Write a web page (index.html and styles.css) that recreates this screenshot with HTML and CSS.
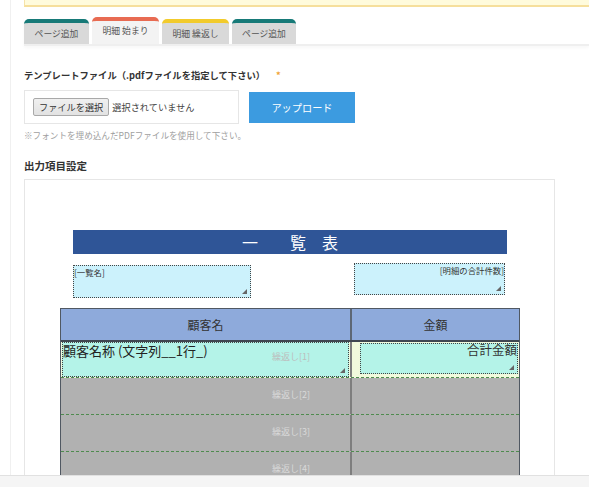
FILE: index.html
```html
<!DOCTYPE html>
<html lang="ja">
<head>
<meta charset="utf-8">
<title>帳票テンプレート設定</title>
<link rel="stylesheet" href="styles.css">
</head>
<body>
<div class="app">
  <div class="rail"></div>
  <div class="main">
    <div class="alert"></div>
    <div class="tabs">
      <div class="tab teal">ページ追加</div>
      <div class="tab red active">明細 始まり</div>
      <div class="tab yellow">明細 繰返し</div>
      <div class="tab teal">ページ追加</div>
    </div>

    <div class="label">テンプレートファイル（.pdfファイルを指定して下さい）<span class="req">*</span></div>
    <div class="upload-row">
      <div class="filebox">
        <span class="filebtn">ファイルを選択</span>
        <span class="filetext">選択されていません</span>
      </div>
      <button class="upload">アップロード</button>
    </div>
    <div class="note">※フォントを埋め込んだPDFファイルを使用して下さい。</div>

    <div class="label big">出力項目設定</div>
    <div class="canvas">
      <div class="title">一　　覧　表</div>
      <div class="field f1"><span>[一覧名]</span><i class="grip"></i></div>
      <div class="field f2 right"><span>[明細の合計件数]</span><i class="grip"></i></div>

      <div class="tbl">
        <div class="thead">
          <div class="c1">顧客名</div>
          <div class="c2">金額</div>
        </div>
        <div class="row first">
          <div class="c1">
            <div class="box lbox"><span>顧客名称 (文字列__1行_)</span><i class="grip"></i></div>
            <span class="rep">繰返し[1]</span>
          </div>
          <div class="c2">
            <div class="box rbox"><span>合計金額</span><i class="grip"></i></div>
          </div>
        </div>
        <div class="row gray">
          <div class="c1"><span class="rep">繰返し[2]</span></div>
          <div class="c2"></div>
        </div>
        <div class="row gray">
          <div class="c1"><span class="rep">繰返し[3]</span></div>
          <div class="c2"></div>
        </div>
        <div class="row gray">
          <div class="c1"><span class="rep">繰返し[4]</span></div>
          <div class="c2"></div>
        </div>
      </div>
    </div>
  </div>
</div>
<div class="footer"></div>
</body>
</html>
```
FILE: styles.css
```css
* { box-sizing: border-box; }
html, body { margin: 0; padding: 0; background: #fff; }
body {
  font-family: "Noto Sans CJK JP", "Noto Sans", sans-serif;
  color: #333;
  width: 589px;
  height: 487px;
  overflow: hidden;
}
.app {
  display: flex;
  height: 475px;
  overflow: hidden;
}
.rail {
  width: 11px;
  flex: none;
  border-right: 1px solid #f0f0f0;
}
.main {
  flex: 1;
  padding-left: 13px;
  min-width: 0;
}
.alert {
  height: 7px;
  background: #fffbdc;
  border-left: 1px solid #f6e3a8;
  border-bottom: 2px solid #f6df9c;
}
.tabs {
  margin-top: 10px;
  height: 29px;
  display: flex;
  align-items: flex-end;
  border-bottom: 2px solid #efefef;
  box-shadow: 0 2px 3px rgba(0,0,0,0.03);
}
.tab {
  height: 25px;
  border-top: 4px solid #177a78;
  border-radius: 5px 5px 0 0;
  background: #d9d9d9;
  color: #555;
  font-size: 8.8px;
  line-height: 21px;
  text-align: center;
  margin-right: 3px;
}
.tab:nth-child(1) { width: 65px; }
.tab:nth-child(2) { width: 67px; margin-right: 3px; }
.tab:nth-child(3) { width: 67px; }
.tab:nth-child(4) { width: 64px; }
.tab.red { border-top-color: #e86b52; }
.tab.yellow { border-top-color: #f2cb2c; }
.tab.active {
  height: 27px;
  background: #f3f3f3;
  line-height: 20px;
}
.label {
  margin-top: 23px;
  font-size: 9.3px;
  line-height: 13px;
  font-weight: bold;
  color: #333;
}
.label .req {
  color: #f0a43a;
  margin-left: 11px;
  font-weight: bold;
}
.label.big {
  margin-top: 18px;
  font-size: 10.5px;
}
.upload-row {
  margin-top: 8px;
  display: flex;
  align-items: center;
}
.filebox {
  width: 215px;
  height: 34px;
  border: 1px solid #e6e6e6;
  display: flex;
  align-items: center;
  padding-left: 8px;
}
.filebtn {
  height: 18px;
  line-height: 16px;
  padding: 0 5px;
  font-size: 9.2px;
  color: #333;
  background: linear-gradient(#f0f0f0, #e2e2e2);
  border: 1px solid #a9a9a9;
  border-radius: 2px;
}
.filetext {
  margin-left: 3px;
  font-size: 9.2px;
  color: #444;
}
.upload {
  margin-left: 10px;
  width: 106px;
  height: 31px;
  border: none;
  background: #3c9be0;
  color: #fff;
  font-family: inherit;
  font-size: 10.2px;
  padding: 0;
}
.note {
  margin-top: 5px;
  font-size: 8.6px;
  line-height: 12px;
  color: #a0a0a0;
}
.canvas {
  position: relative;
  margin-top: 7px;
  width: 531px;
  height: 320px;
  border: 1px solid #e6e6e6;
  background: #fff;
}
.title {
  position: absolute;
  left: 48px;
  top: 50px;
  width: 434px;
  height: 24px;
  background: #2f5597;
  color: #fff;
  font-size: 16px;
  line-height: 24px;
  text-align: center;
  white-space: pre;
}
.field {
  position: absolute;
  background: #ccf2fc;
  border: 1px dotted #444;
  font-size: 8.4px;
  line-height: 11px;
  color: #333;
  padding-top: 1px;
}
.field.right { text-align: right; }
.f1 { left: 48px; top: 85px; width: 178px; height: 33px; }
.f2 { left: 329px; top: 83px; width: 151px; height: 32px; }
.grip {
  position: absolute;
  right: 3px;
  bottom: 3px;
  width: 0;
  height: 0;
  border-left: 5px solid transparent;
  border-bottom: 5px solid #666;
}
.tbl {
  position: absolute;
  left: 35px;
  top: 128px;
  width: 460px;
  border: 1px solid #505862;
  border-bottom: none;
}
.thead {
  display: grid;
  grid-template-columns: 291px 1fr;
  height: 33px;
  background: #8eaadb;
  border-bottom: 2px solid #3f4651;
}
.thead > div {
  display: flex;
  align-items: center;
  justify-content: center;
  font-size: 12px;
  color: #333;
}
.thead .c1 { border-right: 2px solid #5d6775; }
.row {
  position: relative;
  display: grid;
  grid-template-columns: 291px 1fr;
  height: 37px;
  padding-bottom: 1px;
}
.row::after {
  content: "";
  position: absolute;
  left: 0;
  right: 0;
  bottom: 0;
  height: 1px;
  background: repeating-linear-gradient(90deg, #4f8b4f 0 3px, transparent 3px 5px);
}
.row.first { height: 36px; background: #f1f9dc; }
.row.gray { background: #b1b1b1; }
.row .c1 {
  position: relative;
  border-right: 2px solid #7e7e7e;
}
.box {
  position: relative;
  background: #b4f3e8;
  border: 1px dotted #444;
}
.lbox {
  margin: 0 1px 0 1px;
  height: 35px;
  font-size: 13px;
  line-height: 14px;
  color: #222;
  padding-top: 1px;
}
.rbox {
  margin: 1px 1px 0 8px;
  height: 31px;
  font-size: 12.5px;
  line-height: 12px;
  color: #333;
  text-align: right;
}
.rep {
  position: absolute;
  right: 40px;
  top: 11px;
  font-size: 9px;
  line-height: 12px;
  color: #d9d9d9;
}
.row.first .rep { color: #bdbdbd; top: 9px; }
.footer {
  height: 12px;
  background: #f5f5f5;
  border-top: 1px solid #e1e1e1;
}
```
